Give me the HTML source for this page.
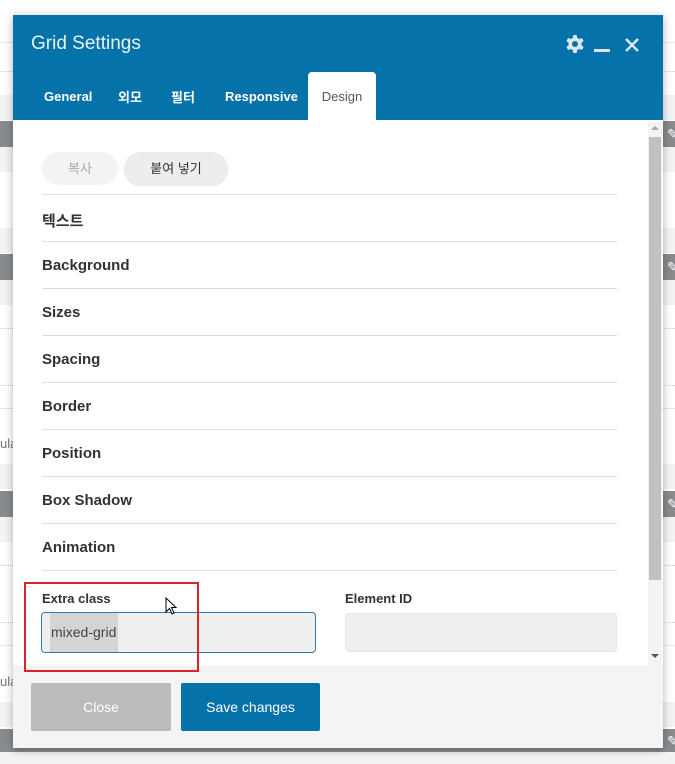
<!DOCTYPE html>
<html><head><meta charset="utf-8"><style>
*{margin:0;padding:0;box-sizing:border-box}
body{width:675px;height:764px;overflow:hidden;background:#f3f3f3;position:relative;font-family:"Liberation Sans","Noto Sans CJK KR",sans-serif}
.a{position:absolute}
.dk{background:#888b8e;left:0;width:675px;height:26px}
.lt{background:#f3f3f3;left:0;width:675px;height:25px}
.dash{left:0;width:675px;border-top:1px dotted #ccc}
.ln{left:0;width:675px;border-top:1px solid #e5e5e5}
.sec{left:42px;width:575px;border-top:1px solid #ddd;height:47px;font-size:15px;font-weight:bold;color:#333;padding-top:15px}
.tab{top:88px;font-size:13px;font-weight:bold;color:#fff}
</style></head><body>
<div class="a" style="left:0;top:0;width:675px;height:752px;background:#fff"></div>
<div class="a ln" style="top:42px"></div>
<div class="a dash" style="top:71px"></div>
<div class="a lt" style="top:95px"></div>
<div class="a dk" style="top:121px"></div>
<div class="a lt" style="top:147px"></div>
<div class="a lt" style="top:228px"></div>
<div class="a dk" style="top:254px"></div>
<div class="a lt" style="top:280px"></div>
<div class="a dash" style="top:328px"></div>
<div class="a dash" style="top:385px"></div>
<div class="a ln" style="top:408px"></div>
<div class="a" style="left:0;top:436px;font-size:13px;color:#777">ula</div>
<div class="a lt" style="top:464px"></div>
<div class="a dk" style="top:491px"></div>
<div class="a lt" style="top:517px"></div>
<div class="a dash" style="top:565px"></div>
<div class="a dash" style="top:622px"></div>
<div class="a ln" style="top:645px"></div>
<div class="a" style="left:0;top:674px;font-size:13px;color:#777">ula</div>
<div class="a lt" style="top:702px"></div>
<div class="a dk" style="top:729px;height:23px"></div>
<div class="a" style="left:667px;top:126px;color:#fff;font-size:14px">✎</div>
<div class="a" style="left:667px;top:259px;color:#fff;font-size:14px">✎</div>
<div class="a" style="left:667px;top:496px;color:#fff;font-size:14px">✎</div>
<div class="a" style="left:667px;top:733px;color:#fff;font-size:14px">✎</div>

<div class="a" style="left:13px;top:15px;width:650px;height:733px;background:#fff;box-shadow:0 2px 8px rgba(0,0,0,.3)">
 <div class="a" style="left:0;top:0;width:650px;height:105px;background:#0572aa"></div>
 <div class="a" style="left:18px;top:18px;font-size:19px;color:#e8f1f7">Grid Settings</div>
 <svg class="a" style="left:552px;top:19px" width="20" height="20" viewBox="0 0 20 20"><g fill="#dbe8f1"><circle cx="10" cy="10" r="6.5"/><rect x="8" y="1" width="4" height="18" rx="1"/><rect x="8" y="1" width="4" height="18" rx="1" transform="rotate(60 10 10)"/><rect x="8" y="1" width="4" height="18" rx="1" transform="rotate(120 10 10)"/></g><circle cx="10" cy="10" r="3" fill="#0572aa"/></svg>
 <div class="a" style="left:581px;top:34px;width:16px;height:3px;background:#dbe8f1"></div>
 <svg class="a" style="left:611px;top:22px" width="16" height="16" viewBox="0 0 16 16"><path d="M2 2L14 14M14 2L2 14" stroke="#dbe8f1" stroke-width="2.4"/></svg>
 <div class="a tab" style="left:31px;top:74px">General</div>
 <div class="a tab" style="left:105px;top:72px">외모</div>
 <div class="a tab" style="left:158px;top:72px">필터</div>
 <div class="a tab" style="left:212px;top:74px">Responsive</div>
 <div class="a" style="left:295px;top:57px;width:68px;height:49px;background:#fff;border-radius:4px 4px 0 0;font-size:13px;color:#555;text-align:center;padding-top:17px">Design</div>

 <div class="a" style="left:29px;top:137px;width:76px;height:33px;border-radius:17px;background:#f3f3f3;color:#aaa;font-size:13px;text-align:center;line-height:33px">복사</div>
 <div class="a" style="left:111px;top:137px;width:104px;height:33px;border-radius:17px;background:#ededed;color:#333;font-size:13px;text-align:center;line-height:33px;box-shadow:0 1px 1px rgba(0,0,0,.1)">붙여 넣기</div>
 <div class="a sec" style="left:29px;top:179px">텍스트</div>
 <div class="a sec" style="left:29px;top:226px">Background</div>
 <div class="a sec" style="left:29px;top:273px">Sizes</div>
 <div class="a sec" style="left:29px;top:320px">Spacing</div>
 <div class="a sec" style="left:29px;top:367px">Border</div>
 <div class="a sec" style="left:29px;top:414px">Position</div>
 <div class="a sec" style="left:29px;top:461px">Box Shadow</div>
 <div class="a sec" style="left:29px;top:508px">Animation</div>
 <div class="a" style="left:29px;top:555px;width:575px;border-top:1px solid #ddd"></div>
 <div class="a" style="left:29px;top:576px;font-size:13px;font-weight:bold;color:#333">Extra class</div>
 <div class="a" style="left:332px;top:576px;font-size:13px;font-weight:bold;color:#333">Element ID</div>
 <div class="a" style="left:28px;top:597px;width:275px;height:41px;background:#efefef;border:1px solid #2d7bb6;border-radius:4px"></div>
 <div class="a" style="left:37px;top:598px;width:68px;height:39px;background:#d4d4d4"></div>
 <div class="a" style="left:38px;top:609px;font-size:14px;color:#444">mixed-grid</div>
 <div class="a" style="left:332px;top:598px;width:272px;height:39px;background:#efefef;border:1px solid #e6e6e6;border-radius:4px"></div>
 <svg class="a" style="left:152px;top:582px" width="14" height="20" viewBox="0 0 14 20"><path d="M1 1L1 15L4.5 11.5L7 17L9 16L6.5 10.5L11 10.5Z" fill="#fff" stroke="#000" stroke-width="1"/></svg>
 <div class="a" style="left:635px;top:107px;width:14px;height:543px;background:#f3f3f3"></div>
 <div class="a" style="left:636px;top:122px;width:12px;height:443px;background:#c1c1c1"></div>
 <div class="a" style="left:638px;top:111px;border:4px solid transparent;border-bottom:4px solid #aaa;border-top:0"></div>
 <div class="a" style="left:638px;top:639px;border:4px solid transparent;border-top:4px solid #555;border-bottom:0"></div>

 <div class="a" style="left:0;top:650px;width:650px;height:83px;background:#f4f4f4"></div>
 <div class="a" style="left:11px;top:567px;width:175px;height:90px;border:2px solid #e0202a"></div>
 <div class="a" style="left:18px;top:668px;width:140px;height:48px;background:#bbb;border-radius:2px;color:#fff;font-size:14px;text-align:center;line-height:48px">Close</div>
 <div class="a" style="left:168px;top:668px;width:139px;height:48px;background:#0572aa;border-radius:2px;color:#fff;font-size:14px;text-align:center;line-height:48px">Save changes</div>
</div>
</body></html>
